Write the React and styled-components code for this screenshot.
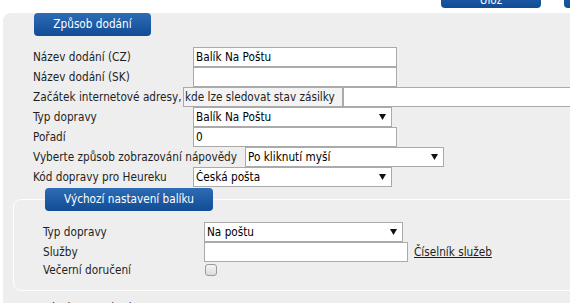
import React from 'react';
import styled, { createGlobalStyle } from 'styled-components';

const GlobalStyle = createGlobalStyle`
  html, body {
    margin: 0;
    padding: 0;
    background: #fff;
    overflow: hidden;
  }
  body {
    font-family: "DejaVu Sans Condensed", "DejaVu Sans", sans-serif;
    font-size: 11.7px;
    color: #1e1e1e;
  }
`;

const Page = styled.div`
  width: 570px;
  height: 303px;
  overflow: hidden;
`;

const TopBar = styled.div`
  display: flex;
  align-items: flex-end;
  gap: 23px;
  height: 8px;
  padding-left: 441px;
  overflow: hidden;
`;

const BlueButton = styled.button`
  flex: none;
  display: block;
  box-sizing: border-box;
  width: ${(p) => p.$w}px;
  height: 23px;
  padding: 0;
  border: 0;
  border-radius: 4px;
  background: linear-gradient(#2d6cb6, #114c94);
  color: #fff;
  font: inherit;
  line-height: 23px;
  text-align: center;
`;

const ToolButton = styled(BlueButton)`
  padding-top: 7px;
  line-height: 16px;
`;

const Panel = styled.section`
  width: 700px;
  margin: 17px 0 0 3px;
  padding: 0 0 0 10px;
  background: #eeeeee;
  border-top-left-radius: 8px;
`;

const Heading = styled(BlueButton)`
  position: relative;
  margin: -12px 0 0 ${(p) => p.$left}px;
`;

const Rows = styled.div`
  display: flex;
  flex-direction: column;
  padding-left: ${(p) => p.$pad}px;
  margin-top: ${(p) => p.$top}px;
`;

const Row = styled.div`
  display: flex;
  align-items: center;
  height: ${(p) => p.$h || 20}px;
`;

const Label = styled.label`
  flex: none;
  box-sizing: border-box;
  min-width: ${(p) => p.$min || 160}px;
  padding-right: 8px;
  white-space: nowrap;
  line-height: 20px;
`;

const BoxedLabel = styled(Label)`
  position: relative;
  isolation: isolate;
  &::before {
    content: '';
    position: absolute;
    z-index: -1;
    left: 150px;
    right: 0;
    top: 0;
    bottom: 0;
    background: #f3f3f3;
    border: 1px solid #aaa;
  }
`;

const TextInput = styled.input`
  box-sizing: border-box;
  width: ${(p) => p.$w}px;
  height: 20px;
  margin: 0;
  padding: 0 2px;
  border: 1px solid #aaa;
  border-radius: 0;
  background: #fff;
  color: #000;
  font: inherit;
  outline: none;
`;

const SelectWrap = styled.div`
  position: relative;
  flex: none;
  width: ${(p) => p.$w}px;
  height: 20px;
`;

const Select = styled.select`
  appearance: none;
  box-sizing: border-box;
  width: 100%;
  height: 20px;
  margin: 0;
  padding: 0 16px 0 2px;
  border: 1px solid #aaa;
  border-radius: 0;
  background: #fff;
  color: #000;
  font: inherit;
  outline: none;
`;

const Arrow = styled.svg`
  position: absolute;
  right: 6px;
  top: 7px;
  pointer-events: none;
`;

const Group = styled.div`
  margin-top: 12px;
  padding-bottom: 12px;
  border: 1px solid #fff;
  border-radius: 8px;
`;

const Link = styled.a`
  margin-left: 6px;
  color: #1e1e1e;
  text-decoration: underline;
`;

const Check = styled.span`
  display: block;
  box-sizing: border-box;
  width: 12px;
  height: 12px;
  margin-left: 1px;
  border: 1px solid #9a9a9a;
  border-radius: 3px;
  background: linear-gradient(#f4f4f4, #dcdcdc);
`;

const Dropdown = ({ w, value }) => (
  <SelectWrap $w={w}>
    <Select defaultValue={value}>
      <option>{value}</option>
    </Select>
    <Arrow width="7" height="6" viewBox="0 0 7 6">
      <path d="M0 0h7L3.5 6z" fill="#111" />
    </Arrow>
  </SelectWrap>
);

const App = () => (
  <Page>
    <GlobalStyle />
    <TopBar>
      <ToolButton $w={100}>Ulož</ToolButton>
      <ToolButton $w={100}>Zpět</ToolButton>
    </TopBar>
    <Panel>
      <Heading $w={117} $left={21}>Způsob dodání</Heading>
      <Rows $pad={20} $top={11}>
        <Row>
          <Label>Název dodání (CZ)</Label>
          <TextInput $w={204} defaultValue="Balík Na Poštu" />
        </Row>
        <Row>
          <Label>Název dodání (SK)</Label>
          <TextInput $w={204} />
        </Row>
        <Row>
          <BoxedLabel>Začátek internetové adresy, kde lze sledovat stav zásilky</BoxedLabel>
          <TextInput $w={300} />
        </Row>
        <Row>
          <Label>Typ dopravy</Label>
          <Dropdown w={199} value="Balík Na Poštu" />
        </Row>
        <Row>
          <Label>Pořadí</Label>
          <TextInput $w={204} defaultValue="0" />
        </Row>
        <Row>
          <Label>Vyberte způsob zobrazování nápovědy</Label>
          <Dropdown w={199} value="Po kliknutí myší" />
        </Row>
        <Row>
          <Label>Kód dopravy pro Heureku</Label>
          <Dropdown w={199} value="Česká pošta" />
        </Row>
      </Rows>
      <Group>
        <Heading $w={168} $left={31}>Výchozí nastavení balíku</Heading>
        <Rows $pad={29} $top={11}>
          <Row>
            <Label $min={161}>Typ dopravy</Label>
            <Dropdown w={199} value="Na poštu" />
          </Row>
          <Row>
            <Label $min={161}>Služby</Label>
            <TextInput $w={204} />
            <Link href="#">Číselník služeb</Link>
          </Row>
          <Row $h={16}>
            <Label $min={161}>Večerní doručení</Label>
            <Check />
          </Row>
        </Rows>
      </Group>
      <Rows $pad={20} $top={7}>
        <Row>
          <Label>Popis dopravy (CZ)</Label>
        </Row>
      </Rows>
    </Panel>
  </Page>
);

export default App;
